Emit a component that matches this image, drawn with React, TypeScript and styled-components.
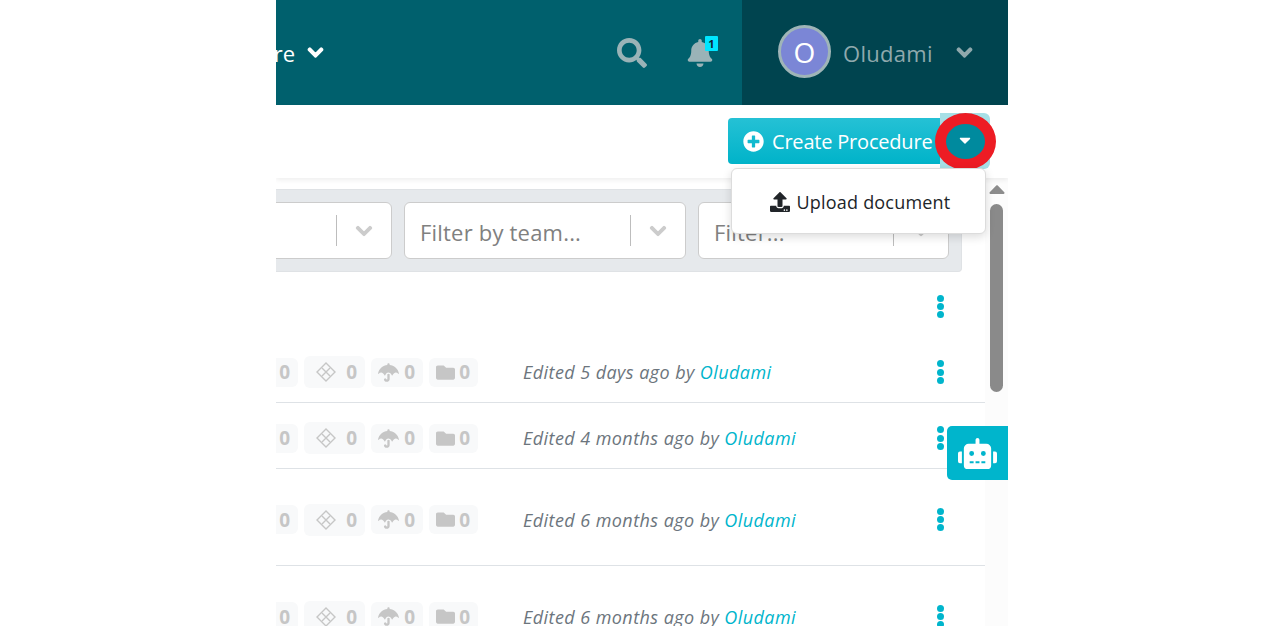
import React from 'react'
import styled, { createGlobalStyle } from 'styled-components'
import {
  FaBell,
  FaCaretDown,
  FaCaretUp,
  FaChevronDown,
  FaFolder,
  FaPlusCircle,
  FaRobot,
  FaSearch,
  FaUmbrella,
  FaUpload
} from 'react-icons/fa'

const ROWS = [
  { height: 70, top: 0, divider: false },
  { height: 61, top: 0, divider: true, when: '5 days' },
  { height: 66, top: 5, divider: true, when: '4 months' },
  { height: 97, top: 5, divider: true, when: '6 months' },
  { height: 100, top: 2, divider: false, when: '6 months' }
]

function DiamondIcon(): JSX.Element {
  return (
    <svg width="20" height="20" viewBox="0 0 20 20" fill="none" stroke="#c6c6c6" strokeWidth="1.4">
      <path d="M10 1 L19 10 L10 19 L1 10 Z" />
      <path d="M6 6 L14 14 M14 6 L6 14" />
    </svg>
  )
}

export default function App(): JSX.Element {
  return (
    <>
      <GlobalSCP />
      <FrameSCP>
        <HeaderSCP>
          <HeaderMainSCP>
            <NavClusterSCP>
              <NavTextSCP>More</NavTextSCP>
              <FaChevronDown size={17} />
            </NavClusterSCP>
            <HeaderIconsSCP>
              <FaSearch size={30} />
              <BellWrapSCP>
                <FaBell size={28} />
                <BadgeSCP>1</BadgeSCP>
              </BellWrapSCP>
            </HeaderIconsSCP>
          </HeaderMainSCP>
          <UserSectionSCP>
            <AvatarSCP>O</AvatarSCP>
            <UserNameSCP>Oludami</UserNameSCP>
            <FaChevronDown size={17} />
          </UserSectionSCP>
        </HeaderSCP>

        <ToolbarSCP>
          <MainButtonSCP>
            <FaPlusCircle size={21} />
            Create Procedure
          </MainButtonSCP>
          <ToggleRingSCP>
            <HighlightSCP>
              <FaCaretDown size={18} color="#fff" />
            </HighlightSCP>
          </ToggleRingSCP>
          <MenuSCP>
            <FaUpload size={20} color="#212529" />
            Upload document
          </MenuSCP>
        </ToolbarSCP>

        <BodySCP>
          <MainSCP>
            <FilterBarSCP>
              <SelectSCP $width={250}>
                <SelectSeparatorSCP />
                <SelectChevronSCP><FaChevronDown size={18} /></SelectChevronSCP>
              </SelectSCP>
              <SelectSCP $width={282}>
                <PlaceholderSCP>Filter by team...</PlaceholderSCP>
                <SelectSeparatorSCP />
                <SelectChevronSCP><FaChevronDown size={18} /></SelectChevronSCP>
              </SelectSCP>
              <SelectSCP $width={251}>
                <PlaceholderSCP>Filter...</PlaceholderSCP>
                <SelectSeparatorSCP />
                <SelectChevronSCP><FaChevronDown size={18} /></SelectChevronSCP>
              </SelectSCP>
            </FilterBarSCP>

            {ROWS.map((row, index) => (
              <RowSCP key={index} $height={row.height} $top={row.top} $divider={row.divider}>
                {row.when && (
                  <>
                    <StatsSCP>
                      <ChipSCP $width={60} $gap={8}>0</ChipSCP>
                      <ChipSCP $width={61} $gap={10} $tall={true}>
                        <DiamondIcon />
                        0
                      </ChipSCP>
                      <ChipSCP $width={52} $gap={5}>
                        <FaUmbrella size={21} />
                        0
                      </ChipSCP>
                      <ChipSCP $width={49} $gap={4}>
                        <FaFolder size={19} />
                        0
                      </ChipSCP>
                    </StatsSCP>
                    <EditedSCP>
                      Edited {row.when} ago by <UserLinkSCP>Oludami</UserLinkSCP>
                    </EditedSCP>
                  </>
                )}
                <DotsSCP>
                  <i />
                  <i />
                  <i />
                </DotsSCP>
              </RowSCP>
            ))}
          </MainSCP>
          <ScrollTrackSCP>
            <FaCaretUp size={24} color="#8c8c8c" />
            <ScrollThumbSCP />
          </ScrollTrackSCP>
          <BotButtonSCP>
            <FaRobot size={39} />
          </BotButtonSCP>
        </BodySCP>
      </FrameSCP>
    </>
  )
}

const GlobalSCP = createGlobalStyle`
  html, body {
    margin: 0;
    padding: 0;
    height: 626px;
    overflow: hidden;
    background: #fff;
    font-family: 'Open Sans', sans-serif;
  }
`
const FrameSCP = styled.div`
  position: relative;
  width: 732px;
  height: 626px;
  margin-left: 276px;
  overflow: hidden;
`
const HeaderSCP = styled.header`
  display: flex;
  height: 105px;
`
const HeaderMainSCP = styled.div`
  flex: 1;
  display: flex;
  align-items: center;
  justify-content: space-between;
  background: #00606d;
`
const NavClusterSCP = styled.div`
  width: 48px;
  display: flex;
  align-items: center;
  justify-content: flex-end;
  gap: 12px;
  overflow: hidden;
  white-space: nowrap;
  color: #fff;
  font-size: 22px;
  flex-shrink: 0;
  svg {
    flex-shrink: 0;
    stroke: currentColor;
    stroke-width: 40px;
  }
`
const NavTextSCP = styled.span`
  flex-shrink: 0;
`
const HeaderIconsSCP = styled.div`
  display: flex;
  align-items: center;
  gap: 39px;
  padding-right: 28px;
  color: #9ab3b7;
`
const BellWrapSCP = styled.div`
  position: relative;
  display: flex;
`
const BadgeSCP = styled.span`
  position: absolute;
  top: -3px;
  left: 19px;
  width: 13px;
  height: 15px;
  background: #00e5ff;
  border-radius: 1px;
  color: #123;
  font-size: 11px;
  font-weight: 700;
  line-height: 15px;
  text-align: center;
`
const UserSectionSCP = styled.div`
  width: 266px;
  box-sizing: border-box;
  display: flex;
  align-items: center;
  padding-left: 36px;
  background: #00444f;
  color: #8fa9ad;
  svg {
    margin-left: 23px;
    stroke: currentColor;
    stroke-width: 40px;
  }
`
const AvatarSCP = styled.div`
  width: 53px;
  height: 53px;
  margin-bottom: 2px;
  box-sizing: border-box;
  display: flex;
  align-items: center;
  justify-content: center;
  border: 3px solid #9fb5b8;
  border-radius: 50%;
  background: #7b86d6;
  color: #fff;
  font-size: 28px;
`
const UserNameSCP = styled.span`
  margin-left: 12px;
  font-size: 22px;
  letter-spacing: 0.3px;
`
const ToolbarSCP = styled.div`
  position: relative;
  z-index: 2;
  height: 73px;
  box-sizing: border-box;
  display: flex;
  align-items: flex-start;
  justify-content: flex-end;
  padding: 8px 18px 0 0;
  background: #fff;
  box-shadow: 0 2px 5px rgba(0, 0, 0, 0.07);
`
const MainButtonSCP = styled.div`
  width: 212px;
  height: 46px;
  margin-top: 5px;
  box-sizing: border-box;
  display: flex;
  align-items: center;
  gap: 8px;
  padding-left: 15px;
  border-radius: 4px 0 0 4px;
  background: linear-gradient(#25c1d5, #00b3c9);
  color: #fff;
  font-size: 20px;
  letter-spacing: -0.2px;
  white-space: nowrap;
`
const ToggleRingSCP = styled.div`
  position: relative;
  width: 50px;
  height: 56px;
  border-radius: 0 6px 6px 0;
  background: #a6dfe6;
`
const HighlightSCP = styled.div`
  position: absolute;
  top: 0;
  left: -5px;
  width: 61px;
  height: 57px;
  box-sizing: border-box;
  display: flex;
  align-items: center;
  justify-content: center;
  padding: 0 2px 3px 0;
  border: 11px solid #ed1c24;
  border-radius: 50%;
  background: #008a9e;
`
const MenuSCP = styled.div`
  position: absolute;
  top: 63px;
  right: 22px;
  width: 255px;
  height: 66px;
  box-sizing: border-box;
  display: flex;
  align-items: center;
  justify-content: center;
  gap: 7px;
  padding: 1px 0 0 3px;
  background: #fff;
  border: 1px solid #dcdcdc;
  border-radius: 6px;
  box-shadow: 0 3px 10px rgba(0, 0, 0, 0.14);
  color: #212529;
  font-size: 18px;
  letter-spacing: 0.2px;
`
const BodySCP = styled.div`
  position: relative;
  display: flex;
  height: 448px;
`
const MainSCP = styled.main`
  flex: 1;
  min-width: 0;
  padding-top: 11px;
`
const FilterBarSCP = styled.div`
  width: 686px;
  height: 83px;
  box-sizing: border-box;
  display: flex;
  justify-content: flex-end;
  align-items: center;
  gap: 12px;
  padding-right: 12px;
  background: #e6e9ec;
  border: 1px solid #dfe2e5;
  border-left: none;
  border-radius: 0 4px 4px 0;
`
const SelectSCP = styled.div<{ $width: number }>`
  width: ${props => props.$width}px;
  height: 57px;
  flex-shrink: 0;
  box-sizing: border-box;
  display: flex;
  align-items: center;
  background: #fff;
  border: 1px solid #cccccc;
  border-radius: 6px;
`
const PlaceholderSCP = styled.span`
  padding: 2px 0 0 15px;
  color: #808080;
  font-size: 22px;
  letter-spacing: 0.2px;
  white-space: nowrap;
`
const SelectSeparatorSCP = styled.span`
  margin-left: auto;
  width: 1.5px;
  height: 31px;
  background: #bdbdbd;
`
const SelectChevronSCP = styled.span`
  width: 54px;
  display: flex;
  justify-content: center;
  padding-top: 1px;
  color: #cccccc;
  svg {
    stroke: currentColor;
    stroke-width: 30px;
  }
`
const RowSCP = styled.div<{ $height: number; $top: number; $divider: boolean }>`
  height: ${props => props.$height}px;
  box-sizing: border-box;
  display: flex;
  align-items: center;
  padding: ${props => props.$top}px 41px 0 0;
  border-bottom: 1px solid ${props => (props.$divider ? '#dee2e6' : 'transparent')};
`
const StatsSCP = styled.div`
  width: 202px;
  flex-shrink: 0;
  display: flex;
  align-items: center;
  justify-content: flex-end;
  gap: 6px;
  overflow: hidden;
`
const ChipSCP = styled.div<{ $width: number; $gap: number; $tall?: boolean }>`
  width: ${props => props.$width}px;
  height: ${props => (props.$tall ? 32 : 29)}px;
  flex-shrink: 0;
  box-sizing: border-box;
  display: flex;
  align-items: center;
  justify-content: flex-end;
  gap: ${props => props.$gap}px;
  padding-right: 8px;
  background: #f8f9fa;
  border-radius: 6px;
  color: #c6c6c6;
  font-size: 19px;
  font-weight: 700;
`
const EditedSCP = styled.div`
  margin-left: 45px;
  color: #6c757d;
  font-size: 18px;
  font-style: italic;
  letter-spacing: 0.43px;
  white-space: nowrap;
`
const UserLinkSCP = styled.span`
  color: #00b5cc;
`
const DotsSCP = styled.div`
  margin-left: auto;
  display: flex;
  flex-direction: column;
  gap: 1.4px;
  i {
    display: block;
    width: 7px;
    height: 7px;
    border-radius: 50%;
    background: #00b5cc;
  }
`
const ScrollTrackSCP = styled.aside`
  width: 23px;
  flex-shrink: 0;
  display: flex;
  flex-direction: column;
  align-items: center;
  background: #fcfcfc;
  svg {
    height: 26px;
    margin: -2px 0 2px;
  }
`
const ScrollThumbSCP = styled.div`
  width: 13px;
  height: 188px;
  border-radius: 7px;
  background: #8a8a8a;
`
const BotButtonSCP = styled.div`
  position: absolute;
  top: 248px;
  right: 0;
  width: 61px;
  height: 54px;
  display: flex;
  align-items: center;
  justify-content: center;
  background: #00b5cc;
  border-radius: 5px 0 0 5px;
  color: #fff;
`
